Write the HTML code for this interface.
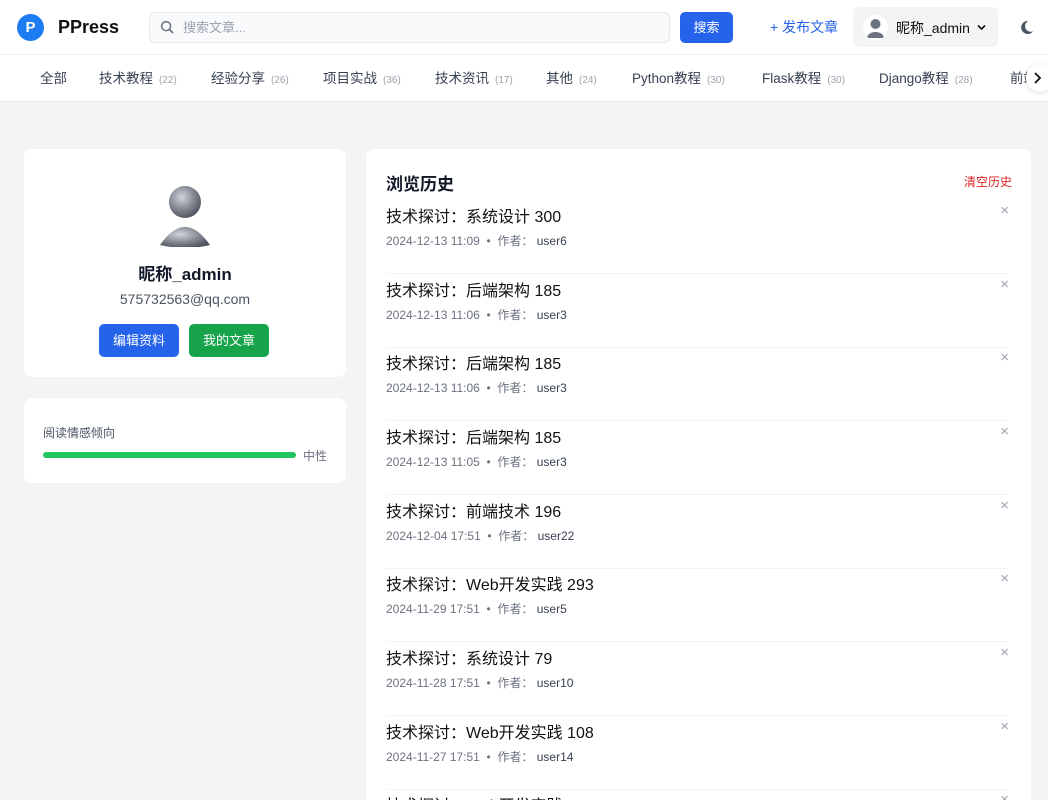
<!DOCTYPE html>
<html><head><meta charset="utf-8"><style>
*{box-sizing:border-box;margin:0;padding:0}
html,body{width:1048px;height:800px;overflow:hidden}
body{background:#f3f4f6;font-family:"Liberation Sans","Noto Sans CJK SC",sans-serif;color:#111827;position:relative}
.hdr{position:absolute;left:0;top:0;width:1048px;height:55px;background:#fff;border-bottom:1px solid #eceef1}
.logo{position:absolute;left:17px;top:14px;width:27px;height:27px;border-radius:50%;background:#1d7cf2;color:#fff;font-weight:bold;font-size:15px;text-align:center;line-height:27px}
.brand{position:absolute;left:58px;top:17px;font-size:18px;font-weight:bold;color:#111}
.search{position:absolute;left:149px;top:12px;width:521px;height:31px;border:1px solid #e5e7eb;border-radius:6px;background:#f9fafb;color:#9ca3af;font-size:13px;line-height:29px;padding-left:33px}
.sbtn{position:absolute;left:680px;top:12px;width:53px;height:31px;border-radius:5px;background:#2563eb;color:#fff;font-size:13px;text-align:center;line-height:31px}
.pub{position:absolute;left:770px;top:17px;color:#2563eb;font-size:14px}
.user{position:absolute;left:853px;top:7px;width:145px;height:40px;border-radius:6px;background:#f3f4f6}
.uav{position:absolute;left:10px;top:8px;width:25px;height:25px;border-radius:50%;background:#fff;overflow:hidden}
.uname{position:absolute;left:43px;top:11px;font-size:14px;color:#111}
.nav{position:absolute;left:0;top:55px;width:1048px;height:47px;background:#fff;border-bottom:1px solid #e5e7eb;white-space:nowrap;overflow:hidden}
.nav span{position:absolute;top:12px;font-size:13.5px;color:#374151}
.nav small{font-size:10px;color:#9ca3af;margin-left:6px}
.card{position:absolute;background:#fff;border-radius:8px}
.btn{position:absolute;top:175px;width:80px;height:33px;border-radius:5px;color:#fff;font-size:13px;text-align:center;line-height:33px}
.item{position:absolute;left:386px;width:623px;height:74px;border-bottom:1px solid #f3f4f6}
.item .t{position:absolute;top:3px;left:0;font-size:16px;color:#111}
.item .m{position:absolute;top:32px;left:0;font-size:12px;color:#6b7280}
.item .m b{font-weight:normal;color:#374151}
.item .x{position:absolute;right:0;top:2px;color:#9ca3af;font-size:15px}
</style></head><body>
<div class="hdr">
<div class="logo">P</div><div class="brand">PPress</div>
<div class="search">搜索文章...</div>
<svg style="position:absolute;left:160px;top:20px" width="15" height="15" viewBox="0 0 16 16"><circle cx="6.5" cy="6.5" r="4.8" fill="none" stroke="#6b7280" stroke-width="1.6"/><path d="M10 10l4 4" stroke="#6b7280" stroke-width="1.8"/></svg>
<div class="sbtn">搜索</div>
<div class="pub">+ 发布文章</div>
<div class="user"><div class="uav"><svg width="25" height="25" viewBox="0 0 25 25"><circle cx="12.5" cy="9" r="5" fill="#6b7280"/><path d="M4 23a8.5 6 0 0 1 17 0z" fill="#6b7280"/></svg></div><div class="uname">昵称_admin</div>
<svg style="position:absolute;left:124px;top:17px" width="9" height="7" viewBox="0 0 9 7"><path d="M1 1.5l3.5 3.5 3.5-3.5" fill="none" stroke="#111" stroke-width="1.6"/></svg></div>
<svg style="position:absolute;left:1019px;top:20px" width="15" height="15" viewBox="0 0 16 16"><path d="M10 1a7 7 0 1 0 5 11A6 6 0 0 1 10 1z" fill="#4b5563"/></svg>
</div>
<div class="nav">
<span style="left:40px">全部</span>
<span style="left:99px">技术教程<small>(22)</small></span>
<span style="left:211px">经验分享<small>(26)</small></span>
<span style="left:323px">项目实战<small>(36)</small></span>
<span style="left:435px">技术资讯<small>(17)</small></span>
<span style="left:546px">其他<small>(24)</small></span>
<span style="left:632px">Python教程<small>(30)</small></span>
<span style="left:762px">Flask教程<small>(30)</small></span>
<span style="left:879px">Django教程<small>(28)</small></span>
<span style="left:1010px">前端</span>
<div style="position:absolute;left:1026px;top:9px;width:28px;height:28px;border-radius:50%;background:#fff;box-shadow:0 1px 4px rgba(0,0,0,.15)"></div>
<svg style="position:absolute;left:1033px;top:17px" width="9" height="12" viewBox="0 0 9 12"><path d="M2 1l5 5-5 5" fill="none" stroke="#111" stroke-width="1.8"/></svg>
</div>
<div class="card" style="left:24px;top:149px;width:322px;height:228px">
<svg style="position:absolute;left:135px;top:36px" width="52" height="62" viewBox="0 0 52 62"><defs><radialGradient id="g" cx=".4" cy=".35" r=".7"><stop offset="0" stop-color="#d1d5db"/><stop offset=".5" stop-color="#8b8f99"/><stop offset="1" stop-color="#4b4f59"/></radialGradient></defs><circle cx="26" cy="17" r="16" fill="url(#g)"/><path d="M1 60Q26 24 51 60Q26 66 1 60z" fill="url(#g)"/></svg>
<div style="position:absolute;left:0;width:322px;top:111px;text-align:center;font-size:17px;font-weight:bold">昵称_admin</div>
<div style="position:absolute;left:0;width:322px;top:142px;text-align:center;font-size:14px;color:#4b5563">575732563@qq.com</div>
<div class="btn" style="left:75px;background:#2563eb">编辑资料</div>
<div class="btn" style="left:165px;background:#16a34a">我的文章</div>
</div>
<div class="card" style="left:24px;top:398px;width:322px;height:85px">
<div style="position:absolute;left:19px;top:26px;font-size:12px;color:#4b5563">阅读情感倾向</div>
<div style="position:absolute;left:19px;top:54px;width:253px;height:6px;border-radius:3px;background:#22c55e"></div>
<div style="position:absolute;left:279px;top:49px;font-size:12px;color:#6b7280">中性</div>
</div>
<div class="card" style="left:366px;top:149px;width:665px;height:651px;border-radius:8px 8px 0 0">
<div style="position:absolute;left:20px;top:21px;font-size:17px;font-weight:bold">浏览历史</div>
<div style="position:absolute;right:19px;top:24px;font-size:12px;color:#dc2626">清空历史</div>
</div>
<div class="item" style="top:200px"><div class="t">技术探讨：系统设计 300</div><div class="m">2024-12-13 11:09 &nbsp;•&nbsp; 作者：&nbsp;<b>user6</b></div><div class="x">×</div></div>
<div class="item" style="top:274px"><div class="t">技术探讨：后端架构 185</div><div class="m">2024-12-13 11:06 &nbsp;•&nbsp; 作者：&nbsp;<b>user3</b></div><div class="x">×</div></div>
<div class="item" style="top:347px"><div class="t">技术探讨：后端架构 185</div><div class="m">2024-12-13 11:06 &nbsp;•&nbsp; 作者：&nbsp;<b>user3</b></div><div class="x">×</div></div>
<div class="item" style="top:421px"><div class="t">技术探讨：后端架构 185</div><div class="m">2024-12-13 11:05 &nbsp;•&nbsp; 作者：&nbsp;<b>user3</b></div><div class="x">×</div></div>
<div class="item" style="top:495px"><div class="t">技术探讨：前端技术 196</div><div class="m">2024-12-04 17:51 &nbsp;•&nbsp; 作者：&nbsp;<b>user22</b></div><div class="x">×</div></div>
<div class="item" style="top:568px"><div class="t">技术探讨：Web开发实践 293</div><div class="m">2024-11-29 17:51 &nbsp;•&nbsp; 作者：&nbsp;<b>user5</b></div><div class="x">×</div></div>
<div class="item" style="top:642px"><div class="t">技术探讨：系统设计 79</div><div class="m">2024-11-28 17:51 &nbsp;•&nbsp; 作者：&nbsp;<b>user10</b></div><div class="x">×</div></div>
<div class="item" style="top:716px"><div class="t">技术探讨：Web开发实践 108</div><div class="m">2024-11-27 17:51 &nbsp;•&nbsp; 作者：&nbsp;<b>user14</b></div><div class="x">×</div></div>
<div class="item" style="top:789px;height:11px;overflow:hidden;border:none"><div class="t">技术探讨：Web开发实践 12</div><div class="x">×</div></div>
</body></html>
